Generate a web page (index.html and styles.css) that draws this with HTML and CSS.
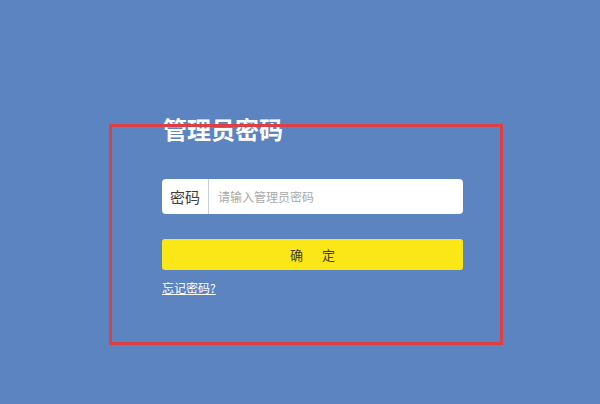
FILE: index.html
```html
<!DOCTYPE html>
<html lang="zh-CN">
<head>
<meta charset="utf-8">
<title>管理员密码</title>
<link rel="stylesheet" href="styles.css">
</head>
<body>
<div class="page">
  <form class="login">
    <h1 class="title">管理员密码</h1>
    <div class="field">
      <label class="field-label">密码</label>
      <span class="field-input">请输入管理员密码</span>
    </div>
    <button type="button" class="submit"><span>确</span><span>定</span></button>
    <a class="forgot" href="#">忘记密码?</a>
  </form>
  <div class="highlight"></div>
</div>
</body>
</html>
```
FILE: styles.css
```css
html, body {
  margin: 0;
  padding: 0;
}
body {
  width: 600px;
  height: 404px;
  background: #5c84c0;
  font-family: "Noto Sans CJK SC", "Noto Sans", sans-serif;
  overflow: hidden;
}
.page {
  position: relative;
  height: 404px;
  padding: 112px 0 0 162px;
  box-sizing: border-box;
}
.login {
  width: 301px;
  display: flex;
  flex-direction: column;
  align-items: stretch;
}
.title {
  margin: 0 0 0 1px;
  font-size: 24px;
  line-height: 34px;
  font-weight: 700;
  color: #ffffff;
}
.field {
  margin-top: 33px;
  height: 35px;
  display: flex;
  background: #ffffff;
  border-radius: 4px;
}
.field-label {
  width: 46px;
  flex: none;
  display: flex;
  align-items: center;
  justify-content: center;
  border-right: 1px solid #c9cfd8;
  font-size: 15px;
  color: #3d3d3d;
}
.field-input {
  display: flex;
  align-items: center;
  padding-left: 9px;
  font-size: 12px;
  color: #a9a9a9;
}
.submit {
  margin-top: 25px;
  height: 31px;
  border: none;
  border-radius: 3px;
  background: #fbe617;
  display: flex;
  align-items: center;
  justify-content: center;
  gap: 19px;
  padding: 0;
  font-family: inherit;
  font-size: 13px;
  color: #3c3c2a;
}
.forgot {
  margin-top: 8px;
  align-self: flex-start;
  font-size: 12px;
  line-height: 20px;
  color: #ffffff;
  text-decoration: underline;
}
.highlight {
  position: absolute;
  left: 109px;
  top: 124px;
  width: 394px;
  height: 221px;
  box-sizing: border-box;
  border: 3px solid #dc3f45;
  pointer-events: none;
}
```
